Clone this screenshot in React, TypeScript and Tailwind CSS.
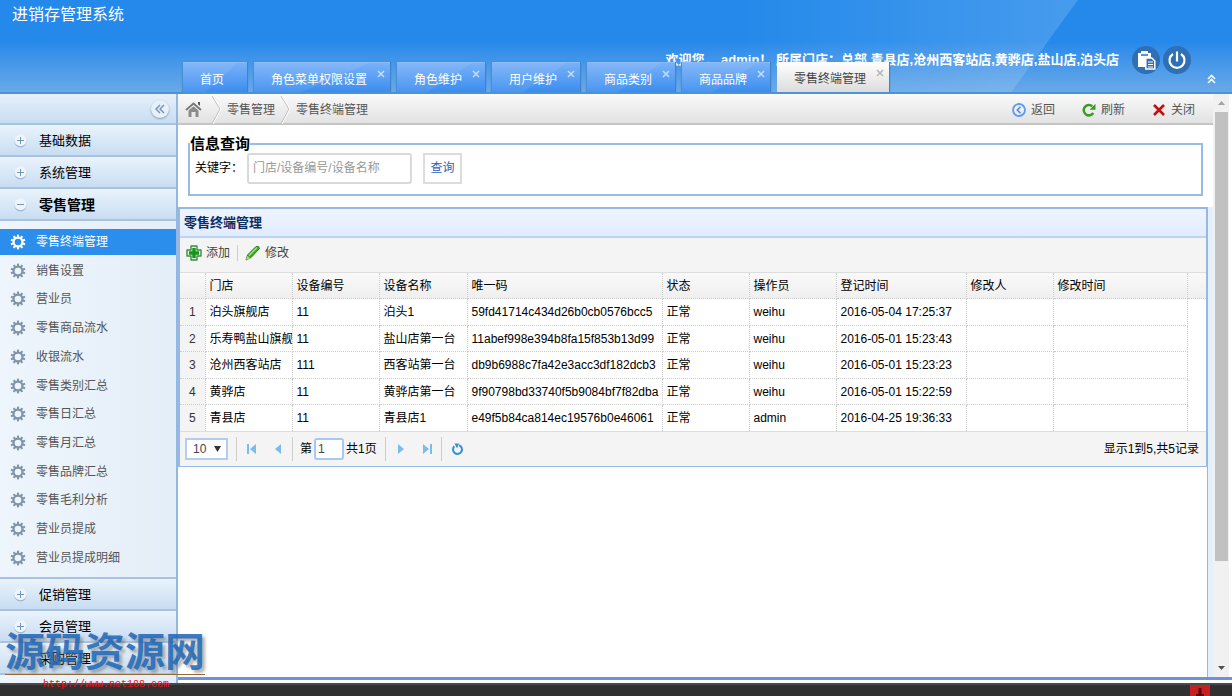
import type { ReactNode } from "react";

const tabs = ["首页", "角色菜单权限设置", "角色维护", "用户维护", "商品类别", "商品品牌", "零售终端管理"];

const menus = [
  "零售终端管理",
  "销售设置",
  "营业员",
  "零售商品流水",
  "收银流水",
  "零售类别汇总",
  "零售日汇总",
  "零售月汇总",
  "零售品牌汇总",
  "零售毛利分析",
  "营业员提成",
  "营业员提成明细",
];

const columns = [
  { title: "门店", width: "w-[87px]" },
  { title: "设备编号", width: "w-[87px]" },
  { title: "设备名称", width: "w-[88px]" },
  { title: "唯一码", width: "w-[195px]" },
  { title: "状态", width: "w-[87px]" },
  { title: "操作员", width: "w-[87px]" },
  { title: "登记时间", width: "w-[130px]" },
  { title: "修改人", width: "w-[87px]" },
  { title: "修改时间", width: "w-[134px]" },
];

const rows = [
  ["泊头旗舰店", "11", "泊头1", "59fd41714c434d26b0cb0576bcc5", "正常", "weihu", "2016-05-04 17:25:37", "", ""],
  ["乐寿鸭盐山旗舰", "11", "盐山店第一台", "11abef998e394b8fa15f853b13d99", "正常", "weihu", "2016-05-01 15:23:43", "", ""],
  ["沧州西客站店", "111", "西客站第一台", "db9b6988c7fa42e3acc3df182dcb3", "正常", "weihu", "2016-05-01 15:23:23", "", ""],
  ["黄骅店", "11", "黄骅店第一台", "9f90798bd33740f5b9084bf7f82dba", "正常", "weihu", "2016-05-01 15:22:59", "", ""],
  ["青县店", "11", "青县店1", "e49f5b84ca814ec19576b0e46061", "正常", "admin", "2016-04-25 19:36:33", "", ""],
];

function Gear() {
  return (
    <svg width="16" height="16" viewBox="0 0 16 16" fill="none" stroke="currentColor" className="shrink-0">
      <circle cx="8" cy="8" r="4.4" strokeWidth="2.2" />
      {[0, 36, 72, 108, 144, 180, 216, 252, 288, 324].map((deg) => (
        <path key={deg} d="M8 0.6v3" strokeWidth="2.1" transform={`rotate(${deg} 8 8)`} />
      ))}
    </svg>
  );
}

// 左侧分组标题
function Group({ title, open }: { title: string; open?: boolean }) {
  return (
    <button
      type="button"
      className={`flex h-8 w-full shrink-0 items-center gap-3 border-b-2 border-[#a9c2de] bg-linear-to-b from-[#eaf3fb] to-[#c8ddf2] pt-0.5 pl-[14px] text-left text-black ${
        open ? "text-[14px] font-bold" : "text-[13px]"
      }`}
    >
      <svg width="13" height="15" viewBox="0 0 13 15" fill="none">
        <circle cx="6.5" cy="7.4" r="6" fill="#9db5cc" />
        <circle cx="6.5" cy="6.2" r="6" fill="#edf4fb" />
        <path d={open ? "M3 6.5h7" : "M3 6.5h7M6.5 3v7"} stroke="#7396ba" />
      </svg>
      {title}
    </button>
  );
}

function Header() {
  return (
    <header className="relative flex h-[94px] shrink-0 flex-col justify-between overflow-hidden border-b-2 border-[#4d92d6] bg-linear-to-b from-[#2489ea] from-45% to-[#68a9e8]">
      <svg className="absolute inset-y-0 right-0 h-full" width="500" height="94" viewBox="0 0 500 94">
        <defs>
          <linearGradient id="shine">
            <stop offset="0" stopColor="#fff" stopOpacity="0" />
            <stop offset="1" stopColor="#fff" stopOpacity="0.16" />
          </linearGradient>
        </defs>
        <path d="M0 0H348L280 94H0z" fill="url(#shine)" />
      </svg>
      <h1 className="relative pt-[3px] pl-3 text-[16px] leading-6 text-white">进销存管理系统</h1>
      <p className="absolute top-[51px] right-[113px] text-[13px] leading-[18px] font-bold whitespace-pre text-white">
        欢迎您， admin！ 所属门店：总部,青县店,沧州西客站店,黄骅店,盐山店,泊头店
      </p>
      <nav className="relative flex gap-[7px] pl-[183px]">
        {tabs.map((t, i) => {
          const active = i === tabs.length - 1;
          return (
            <div
              key={t}
              className={`relative flex h-[30px] items-center pt-1 pr-[23px] pl-[17px] text-[12px] ${
                active
                  ? "bg-linear-to-b from-white to-[#dcdcdc] text-[#444] shadow-[1px_0_1px_#3f83c8]"
                  : "border-t border-[#8cbcfa] bg-linear-to-b from-[#78b1f8] to-[#3a8df0] text-white shadow-[1px_0_1px_#3f83c8,-1px_0_1px_#4a8fd4]"
              }`}
            >
              {!active && (
                <svg className="absolute inset-0 h-full w-full" viewBox="0 0 100 30" preserveAspectRatio="none">
                  <path d="M0 0H85L35 30H0z" fill="#fff" opacity="0.08" />
                </svg>
              )}
              <a href="#" className="relative">{t}</a>
              {i > 0 && (
                <button type="button" aria-label="关闭标签" className="absolute top-[7px] right-[5px]">
                  <svg width="8" height="8" viewBox="0 0 8 8" stroke={active ? "#b5b5b5" : "#c5defb"} strokeWidth="1.5">
                    <path d="M1 1l6 6M7 1L1 7" />
                  </svg>
                </button>
              )}
            </div>
          );
        })}
      </nav>
      <div className="absolute top-[46px] right-[41px] flex gap-[3px]">
        <button type="button" aria-label="任务" className="flex size-7 items-center justify-center rounded-full bg-[#2f6fb3]">
          <svg width="20" height="20" viewBox="0 0 20 20" fill="none">
            <path d="M2 3h3v-2h7v2h3v5h-5v9H2z" fill="#fff" />
            <path d="M5 5h7" stroke="#2f6fb3" strokeWidth="1.5" />
            <path d="M9.800 8h6l3 3v8h-9z" fill="#2f6fb3" stroke="#fff" strokeWidth="1.5" />
            <path d="M12 12h5M12 14.500h5M12 17h5" stroke="#fff" />
          </svg>
        </button>
        <button type="button" aria-label="退出" className="flex size-7 items-center justify-center rounded-full bg-[#2f6fb3]">
          <svg width="20" height="20" viewBox="0 0 20 20" fill="none" stroke="#fff" strokeWidth="2.2">
            <path d="M6 4a7.5 7.5 0 1 0 8 0M10 1.5v10" />
          </svg>
        </button>
      </div>
      <button type="button" aria-label="收起" className="absolute right-4 bottom-2">
        <svg width="9" height="10" viewBox="0 0 9 10" fill="none" stroke="#fff" strokeWidth="1.6">
          <path d="M1 5l3.5-3.5L8 5M1 9l3.5-3.5L8 9" />
        </svg>
      </button>
    </header>
  );
}

function Sidebar() {
  return (
    <aside className="flex w-[178px] shrink-0 flex-col overflow-hidden border-r-2 border-[#94b7e0] bg-linear-to-r from-[#eef5fc] to-[#e4eef8]">
      <div className="flex h-[31px] shrink-0 items-center justify-end border-b-2 border-[#a9c2de] bg-linear-to-b from-[#e6f0fa] to-[#c8ddf2] pr-[7px]">
        <button type="button" aria-label="折叠菜单" className="flex size-[18px] items-center justify-center rounded-full bg-[#e6f0f9] shadow-[0_1px_2px_#7f9dbd]">
          <svg width="10" height="10" viewBox="0 0 10 10" fill="none" stroke="#7192b5" strokeWidth="1.4">
            <path d="M5 1L1 5l4 4M9 1L5 5l4 4" />
          </svg>
        </button>
      </div>
      <Group title="基础数据" />
      <Group title="系统管理" />
      <Group title="零售管理" open />
      <div className="shrink-0 border-b-2 border-[#a9c2de] pt-2 pb-1.5">
        <ul className="flex h-[342px] flex-col justify-between text-[12px] text-[#555]">
          {menus.map((m, i) => (
            <li key={m}>
              <a
                href="#"
                className={`flex h-[26px] items-center gap-[10px] pl-[10px] ${i === 0 ? "bg-[#2c8eec] text-white" : ""}`}
              >
                <span className={i === 0 ? "text-white" : "text-[#8095ab]"}>
                  <Gear />
                </span>
                {m}
              </a>
            </li>
          ))}
        </ul>
      </div>
      <Group title="促销管理" />
      <Group title="会员管理" />
      <Group title="采购管理" />
    </aside>
  );
}

function Crumb() {
  return (
    <svg width="11" height="30" viewBox="0 0 11 30" fill="none" className="shrink-0">
      <path d="M1 1l8 13-8 15" stroke="#b9b9b9" />
      <path d="M2 1l8 13-8 15" stroke="#fff" />
    </svg>
  );
}

function Tool({ label, children }: { label: string; children: ReactNode }) {
  return (
    <button type="button" className="flex items-center gap-[5px]">
      <svg width="14" height="14" viewBox="0 0 14 14" fill="none">
        {children}
      </svg>
      {label}
    </button>
  );
}

function Toolbar() {
  return (
    <div className="flex h-[31px] shrink-0 items-center justify-between border-b-2 border-[#c4c4c4] bg-linear-to-b from-[#fafafa] to-[#e2e2e2] pt-0.5 pr-[18px] pl-[7px] text-[12px] text-[#555]">
      <div className="flex items-center gap-[5px]">
        <svg width="17" height="17" viewBox="0 0 17 17" fill="none" className="mr-1">
          <path d="M1 9l7.5-6.500L16 9" stroke="#777" strokeWidth="1.8" />
          <path d="M3.500 9.500l5-4.300 5 4.300V16h-3v-5h-4v5h-3z" fill="#8b8b8b" />
          <path d="M13 1h2v4l-2-1.700z" fill="#555" />
        </svg>
        <span className="flex items-center gap-[5px]">
          <Crumb />
          <a href="#">零售管理</a>
        </span>
        <span className="flex items-center gap-[5px]">
          <Crumb />
          <span>零售终端管理</span>
        </span>
      </div>
      <div className="flex items-center gap-[27px]">
        <Tool label="返回">
          <circle cx="7" cy="7" r="6" stroke="#5b9df0" strokeWidth="1.8" />
          <path d="M8.500 3.800L5.300 7l3.200 3.200" stroke="#4a8be0" strokeWidth="1.6" />
        </Tool>
        <Tool label="刷新">
          <path d="M11.300 10A5.200 5.200 0 1 1 10.300 3.200" stroke="#3a9b25" strokeWidth="2.5" />
          <path d="M13.500 0.800v6h-6z" fill="#3a9b25" />
        </Tool>
        <Tool label="关闭">
          <path d="M2 2l10 10M12 2L2 12" stroke="#c4100c" strokeWidth="2.6" />
        </Tool>
      </div>
    </div>
  );
}

function Search() {
  return (
    <form className="mx-[10px] mt-[10px] mb-[11px]">
      <fieldset className="h-[61px] border-2 border-[#98bbe9]">
        <legend className="text-[15px] leading-[18px] font-bold text-black">信息查询</legend>
        <div className="flex h-[30px] items-center pl-[5px] text-[12px]">
          <label htmlFor="keyword" className="w-[52px] whitespace-nowrap">关键字：</label>
          <input
            id="keyword"
            placeholder="门店/设备编号/设备名称"
            className="h-[31px] w-[165px] rounded-[3px] border-2 border-[#d9d9d9] bg-white px-1 placeholder:text-[#999]"
          />
          <button type="button" className="ml-[11px] h-[31px] w-[39px] border-2 border-[#dcdcdc] bg-white text-[#2f62b8]">
            查询
          </button>
        </div>
      </fieldset>
    </form>
  );
}

function Split() {
  return <span className="h-6 border-l border-[#ccc]" />;
}

function PageButton({ label, d }: { label: string; d: string }) {
  return (
    <button type="button" aria-label={label} className="flex w-[26px] justify-center">
      <svg width="12" height="12" viewBox="0 0 12 12" fill="#7bbcea">
        <path d={d} />
      </svg>
    </button>
  );
}

function Grid() {
  return (
    <div className="min-w-0 flex-1 border-r border-[#95b8e7] bg-white">
      <section className="border-t-2 border-r border-b border-[#95b8e7] text-[12px] text-black">
        <div className="border-l-2 border-[#95b8e7]">
          <h2 className="h-[29px] border-b-2 border-[#bdd3f2] bg-linear-to-b from-[#eff5ff] to-[#e0ecff] pl-1 text-[13px] leading-[27px] font-bold text-[#0e2d5f]">
            零售终端管理
          </h2>
          <div className="flex h-[34px] items-center bg-[#f4f4f4] pb-1 pl-1.5 text-[#444]">
            <button type="button" className="flex items-center gap-1">
              <svg width="16" height="16" viewBox="0 0 16 16">
                <path d="M5 1h6v4h4v6h-4v4H5v-4H1V5h4z" fill="#e5f5e4" stroke="#3f8a45" strokeWidth="1.4" strokeLinejoin="round" />
                <path d="M8 3v10M3 8h10" stroke="#12971b" strokeWidth="3.4" />
              </svg>
              添加
            </button>
            <span className="mx-[7px] h-4 border-l border-[#ccc]" />
            <button type="button" className="flex items-center gap-1">
              <svg width="16" height="16" viewBox="0 0 16 16">
                <path d="M1 15l1.500-5L11 1.500q3-1 3.500 2L6 12.500z" fill="#3aaa1c" stroke="#2b7d1b" />
                <path d="M4 10.500L12 2.500" stroke="#a5e28a" strokeWidth="1.5" />
                <path d="M1 15l1.300-4.200 2.800 2.500z" fill="#d9c49a" />
              </svg>
              修改
            </button>
          </div>
          <table className="w-full table-fixed border-collapse border-y border-[#ddd] text-left">
            <thead>
              <tr className="h-[26px] bg-linear-to-b from-[#f9f9f9] to-[#efefef]">
                <th className="w-[25px] border-r border-b border-dotted border-[#ccc]" />
                {columns.map((c) => (
                  <th key={c.title} className={`${c.width} border-r border-b border-dotted border-[#ccc] px-1 font-normal`}>
                    {c.title}
                  </th>
                ))}
                <th className="border-b border-dotted border-[#ccc]" />
              </tr>
            </thead>
            <tbody>
              {rows.map((row, i) => (
                <tr key={row[3]} className="h-[27px] even:h-[26px]">
                  <td className="border-r border-b border-dotted border-[#ccc] bg-[#f4f4f4] text-center text-[#333]">{i + 1}</td>
                  {row.map((cell, j) => (
                    <td key={j} className="overflow-hidden border-r border-b border-dotted border-[#ccc] pl-1 whitespace-nowrap">
                      {cell}
                    </td>
                  ))}
                  <td />
                </tr>
              ))}
            </tbody>
          </table>
          <div className="flex h-[34px] items-center justify-between bg-[#f4f4f4] pr-[7px] pl-[5px]">
            <div className="flex items-center">
              <span className="relative mr-2 flex items-center">
                <select aria-label="每页记录数" className="h-[22px] w-[43px] appearance-none border-2 border-[#b3cdf0] bg-white pl-1.5 text-[#444]">
                  <option>10</option>
                </select>
                <svg className="pointer-events-none absolute right-[7px]" width="7" height="6" viewBox="0 0 7 6" fill="#333">
                  <path d="M0 0h7L3.500 6z" />
                </svg>
              </span>
              <Split />
              <span className="flex w-[55px] pl-0.5">
                <PageButton label="首页" d="M1 1h2v10H1zM10 1v10L4 6z" />
                <PageButton label="上一页" d="M9 1v10L3 6z" />
              </span>
              <Split />
              <label className="ml-[7px] flex items-center gap-0.5">
                第
                <input defaultValue="1" className="h-[22px] w-[30px] rounded-[3px] border-2 border-[#a9c8f0] bg-white px-0.5 text-[#444]" />
              </label>
              <span className="mr-2 ml-0.5">共1页</span>
              <Split />
              <span className="flex w-[55px] pl-0.5">
                <PageButton label="下一页" d="M3 1v10l6-5z" />
                <PageButton label="末页" d="M2 1v10l6-5zM9 1h2v10H9z" />
              </span>
              <Split />
              <button type="button" aria-label="刷新" className="ml-[9px]">
                <svg width="13" height="13" viewBox="0 0 13 13" fill="none">
                  <path d="M8 2.200A4.500 4.500 0 1 1 3.300 3.300" stroke="#2e93dc" strokeWidth="2" />
                  <path d="M3.500 0.500h4.500l-2 5z" fill="#2e93dc" />
                </svg>
              </button>
            </div>
            <span>显示1到5,共5记录</span>
          </div>
        </div>
      </section>
    </div>
  );
}

function Scrollbar() {
  return (
    <div className="mr-[3px] flex w-4 shrink-0 flex-col items-center bg-[#f1f1f1] py-[7px]">
      <svg width="7" height="4" viewBox="0 0 7 4" fill="#a3a3a3">
        <path d="M0 4h7L3.500 0z" />
      </svg>
      <div className="my-[7px] flex w-[13px] flex-1 flex-col">
        <div className="h-[82%] bg-[#c1c1c1]" />
      </div>
      <svg width="7" height="4" viewBox="0 0 7 4" fill="#505050">
        <path d="M0 0h7L3.500 4z" />
      </svg>
    </div>
  );
}

// 左下角水印
function Watermark() {
  return (
    <div className="pointer-events-none absolute bottom-0 left-[5px] w-[200px]">
      <div className="border-b border-[#9a6a35] text-[40px] leading-[44px] font-bold whitespace-nowrap text-[#1c66b8]/85 [text-shadow:3px_3px_3px_rgba(90,90,90,0.45)]">
        源码资源网
      </div>
      <div className="h-[21px] pl-[38px] font-['Liberation_Mono','Noto_Sans_CJK_SC',monospace] text-[10px] leading-[20px] text-[#f01010]">
        http://www.net188.com
      </div>
    </div>
  );
}

export default function App() {
  return (
    <div className="relative flex h-screen flex-col overflow-hidden bg-white font-['Liberation_Sans','Noto_Sans_CJK_SC',sans-serif]">
      <Header />
      <div className="flex min-h-0 flex-1">
        <Sidebar />
        <div className="flex min-w-0 flex-1 flex-col">
          <div className="flex min-h-0 flex-1 border-b-[3px] border-[#6b93dd]">
            <main className="flex min-w-0 flex-1 flex-col">
              <Toolbar />
              <Search />
              <div className="flex min-h-0 flex-1 bg-[#e6f0fa] pr-[5px]">
                <Grid />
              </div>
            </main>
            <Scrollbar />
          </div>
          <div className="h-[3px] bg-white" />
        </div>
      </div>
      <footer className="flex h-[13px] shrink-0 justify-end border-t-2 border-[#4a4a4a] bg-[#303030] pr-[22px]">
        <div className="flex w-5 items-end justify-center bg-[#c82020]">
          <svg width="8" height="8" viewBox="0 0 8 8" fill="#5b0505">
            <path d="M2.500 0h3v6H8v2H0V6h2.500z" />
          </svg>
        </div>
      </footer>
      <Watermark />
    </div>
  );
}
